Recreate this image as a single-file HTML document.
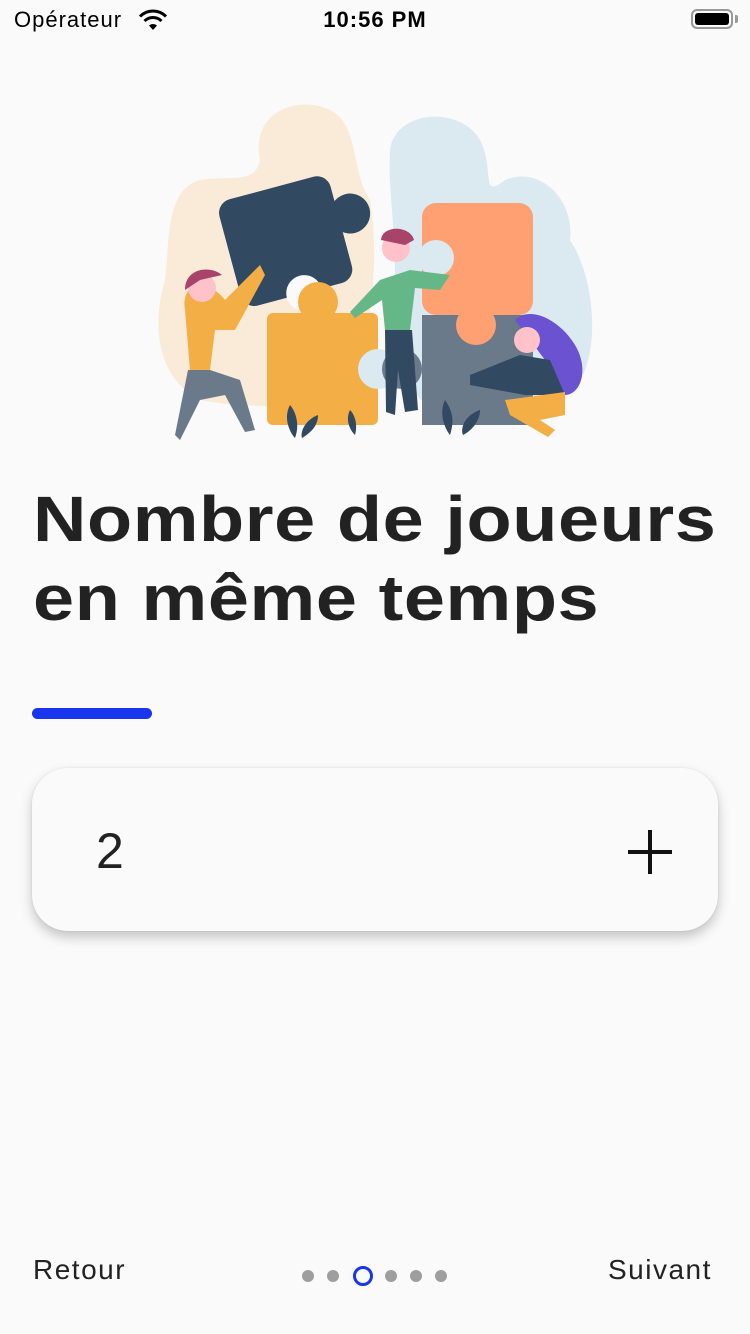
<!DOCTYPE html>
<html><head><meta charset="utf-8"><style>
body{margin:0;width:750px;height:1334px;background:#fafafa;font-family:"Liberation Sans",sans-serif;position:relative;overflow:hidden;color:#222}
.abs{position:absolute}
h1{position:absolute;left:33px;top:480px;margin:0;font-size:64px;line-height:79px;font-weight:bold;letter-spacing:0.5px;color:#222;transform:scaleX(1.155);transform-origin:0 0;white-space:nowrap}
</style></head><body>
<div class="abs" style="left:14px;top:7px;font-size:22px;color:#000;letter-spacing:1px">Opérateur</div>
<svg class="abs" style="left:138px;top:9px" width="30" height="22" viewBox="0 0 30 22"><path d="M15 21 L11 16.5 A6 6 0 0 1 19 16.5Z" fill="#000"/><path d="M6.5 12 A12 12 0 0 1 23.5 12" stroke="#000" stroke-width="3" fill="none"/><path d="M2 7.5 A18 18 0 0 1 28 7.5" stroke="#000" stroke-width="3" fill="none"/></svg>
<div class="abs" style="left:0;width:750px;text-align:center;top:7px;font-size:22px;font-weight:bold;color:#000;letter-spacing:1px">10:56 PM</div>
<div class="abs" style="left:691px;top:9px;width:42px;height:20px;border:2px solid #999;border-radius:6px;box-sizing:border-box"><div style="margin:2px;height:12px;background:#000;border-radius:3px"></div></div>
<div class="abs" style="left:735px;top:15px;width:3px;height:8px;background:#999;border-radius:0 2px 2px 0"></div>

<svg class="abs" style="left:0;top:0" width="750" height="460" viewBox="0 0 750 460">
<path d="M260 160 C250 110 300 95 330 110 C360 125 350 170 370 200 C380 260 370 320 360 380 C340 410 250 410 200 400 C160 380 150 330 165 280 C170 240 165 190 200 180 C230 175 255 185 260 160Z" fill="#faebd8"/>
<path d="M390 150 C395 110 460 105 480 140 C495 170 480 200 505 180 C540 165 575 200 570 240 C590 270 600 330 585 370 C570 410 500 420 440 410 C400 400 390 340 395 280 C395 220 388 190 390 150Z" fill="#dbeaf1"/>
<g transform="rotate(-15 290 240)"><rect x="228" y="185" width="115" height="110" rx="14" fill="#324962"/><circle cx="355" cy="230" r="20" fill="#324962"/><circle cx="290" cy="295" r="18" fill="#fafafa"/></g>
<rect x="267" y="313" width="111" height="112" rx="6" fill="#f3ae46"/><circle cx="318" cy="302" r="20" fill="#f3ae46"/><circle cx="378" cy="369" r="20" fill="#dbeaf1"/>
<rect x="422" y="203" width="111" height="112" rx="14" fill="#ffa072"/><circle cx="436" cy="258" r="18" fill="#dbeaf1"/>
<rect x="422" y="315" width="111" height="110" fill="#6a7a8b"/><circle cx="402" cy="369" r="20" fill="#6a7a8b"/><circle cx="476" cy="325" r="20" fill="#ffa072"/>
<path d="M185 310 C180 280 210 280 225 300 L260 265 L265 275 L235 330 L215 330 L210 370 L190 370Z" fill="#f3ae46"/>
<path d="M188 370 L210 370 L240 380 L255 430 L245 432 L225 395 L200 400 L180 440 L175 435Z" fill="#6a7a8b"/>
<circle cx="202" cy="288" r="14" fill="#ffc2c8"/><path d="M185 290 C185 268 210 265 222 275 L200 280Z" fill="#a8436a"/>
<path d="M380 280 L410 270 L450 275 L440 290 L415 288 L410 330 L385 330 L382 300 L355 318 L350 312Z" fill="#66b787"/>
<path d="M385 330 L412 330 L418 410 L405 412 L398 370 L395 415 L386 412Z" fill="#324962"/>
<circle cx="396" cy="248" r="14" fill="#ffc2c8"/><path d="M381 240 C382 225 410 225 414 240 L405 245Z" fill="#a8436a"/>
<path d="M515 320 C530 305 560 320 575 345 C590 370 580 395 565 395 L545 360Z" fill="#6a52d0"/>
<path d="M470 375 L520 355 L550 360 L565 395 L525 395 L470 385Z" fill="#324962"/>
<path d="M505 400 L565 392 L565 415 L540 420 L555 430 L548 437 L510 415Z" fill="#f3ae46"/>
<circle cx="527" cy="340" r="13" fill="#ffc2c8"/>
<path d="M290 405 C282 420 292 435 295 438 C300 425 296 412 290 405Z M318 415 C305 420 300 432 302 438 C312 432 318 425 318 415Z M350 410 C345 420 350 430 355 435 C358 425 355 415 350 410Z" fill="#324962"/>
<path d="M445 400 C438 415 446 430 450 435 C455 420 452 410 445 400Z M480 410 C465 415 460 428 463 435 C473 430 480 420 480 410Z" fill="#324962"/>
</svg>

<h1>Nombre de joueurs<br>en même temps</h1>
<div class="abs" style="left:32px;top:708px;width:120px;height:11px;border-radius:6px;background:#1a35f0"></div>
<div class="abs" style="left:32px;top:768px;width:686px;height:163px;border-radius:36px;background:#fafafa;box-shadow:0 6px 12px rgba(0,0,0,0.22),0 0 2px rgba(0,0,0,0.08)"></div>
<div class="abs" style="left:96px;top:822px;font-size:50px;font-weight:300;color:#222">2</div>
<div class="abs" style="left:628px;top:850px;width:44px;height:4px;background:#111"></div>
<div class="abs" style="left:648px;top:830px;width:4px;height:44px;background:#111"></div>

<div class="abs" style="left:33px;top:1254px;font-size:28px;color:#222;letter-spacing:1.5px">Retour</div>
<div class="abs" style="left:608px;top:1254px;font-size:28px;color:#222;letter-spacing:1.5px">Suivant</div>
<div class="abs" style="left:302px;top:1270px;width:12px;height:12px;border-radius:50%;background:#9e9e9e"></div>
<div class="abs" style="left:327px;top:1270px;width:12px;height:12px;border-radius:50%;background:#9e9e9e"></div>
<div class="abs" style="left:353px;top:1266px;width:20px;height:20px;border-radius:50%;border:3.5px solid #1a35f0;box-sizing:border-box"></div>
<div class="abs" style="left:385px;top:1270px;width:12px;height:12px;border-radius:50%;background:#9e9e9e"></div>
<div class="abs" style="left:410px;top:1270px;width:12px;height:12px;border-radius:50%;background:#9e9e9e"></div>
<div class="abs" style="left:435px;top:1270px;width:12px;height:12px;border-radius:50%;background:#9e9e9e"></div>
</body></html>
